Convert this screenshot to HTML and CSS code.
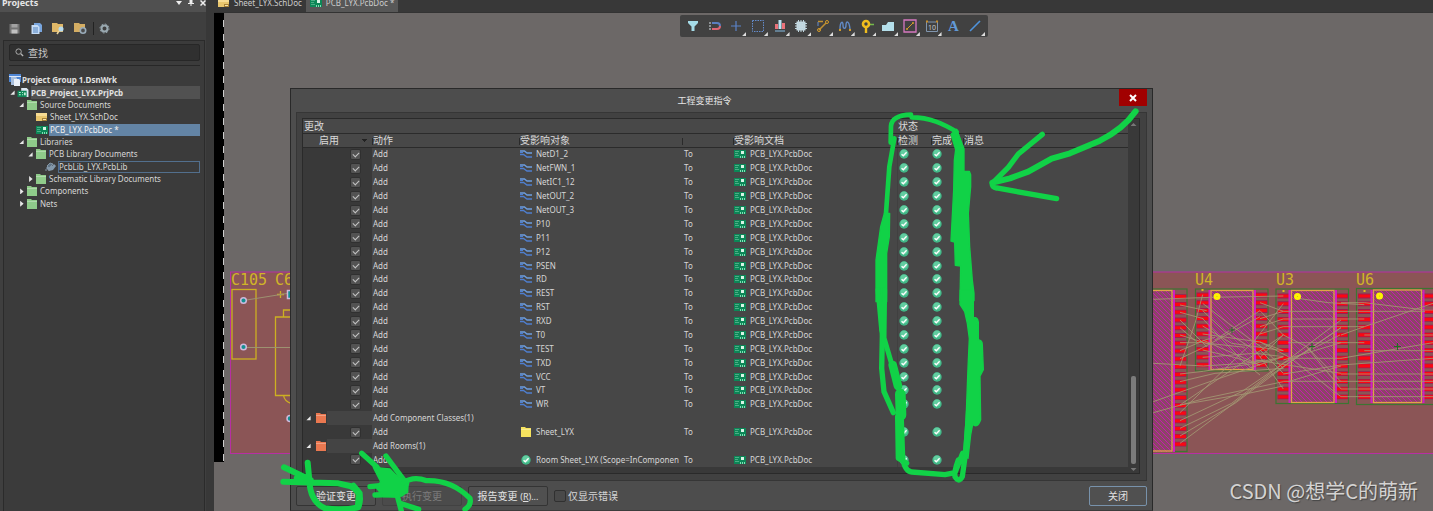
FILE: index.html
```html
<!DOCTYPE html>
<html lang="zh-CN">
<head>
<meta charset="utf-8">
<title>PCB_LYX.PcbDoc - 工程变更指令</title>
<link rel="stylesheet" href="styles.css">
</head>
<body>
<svg class="defs" aria-hidden="true">
  <symbol id="i-sch" viewBox="0 0 12 10"><path d="M0 1h11v8H0z" fill="#e9c66d"/><path d="M0 1h11v3H0z" fill="#f7dc93"/><path d="M6 6h5v3H6z" fill="#a78136"/><path d="M7 7h3v1H7z" fill="#f9e6b0"/></symbol>
  <symbol id="i-pcb" viewBox="0 0 12 10"><path d="M0 1h12v8H0z" fill="#0c8757"/><path d="M1 2.500h4M1 4.500h3M1 6.500h4" stroke="#5cb892" stroke-width=".8"/><path d="M7 2h3v3H7z" fill="#d9f5e6"/><path d="M6 7h1v2H6zM8 7h1v2H8zM10 7h1v2h-1z" fill="#7fe0b5"/></symbol>
  <symbol id="i-folder" viewBox="0 0 12 10"><path d="M1 0h4l1 1h5v9H1z" fill="currentColor"/><path d="M1 2.500h10" stroke="#fff" stroke-opacity=".3"/></symbol>
  <symbol id="i-net" viewBox="0 0 12 9"><g fill="none" stroke-width="1.300"><path d="M0 1.500h4.500L7 3.500h5" stroke="#6d9ee0"/><path d="M0 5h3.500L7 7.500h5M0 2.800h3" stroke="#4f7fd0"/></g></symbol>
  <symbol id="i-ok" viewBox="0 0 10 10"><circle cx="5" cy="5" r="4.700" fill="#41b787"/><circle cx="5" cy="4" r="3.500" fill="#62cda0"/><path d="M2.600 5.200l1.700 1.600 3.300-3.500" fill="none" stroke="#fff" stroke-width="1.300"/></symbol>
  <symbol id="i-lib" viewBox="0 0 12 10"><path d="M1 6l3-3 3 1 2-2 2 2-3 4-4 1z" fill="#8398ab"/><path d="M2 4l3-3 3 1-4 4zM1 7v2M4 7v2" fill="#5f7486" stroke="#8495a3"/></symbol>
  <symbol id="i-prj" viewBox="0 0 12 11"><path d="M4 0h6l2 2v8H4z" fill="#dce7f2"/><path d="M0 3h10v7H0z" fill="#0c8757"/><path d="M1.500 4.500h2v1h-2zM1.500 7h2v1h-2zM5 4.500h1v1H5zM5 7h1v1H5zM7 5h2v3H7z" fill="#bdf0d8"/></symbol>
  <symbol id="i-group" viewBox="0 0 12 12"><path d="M0 0h12v8H0z" fill="#4f86d4"/><path d="M0 2h12v1H0z" fill="#dbe8fa"/><path d="M2 3h5l1 1v7H2z" fill="#a9bfdc"/><path d="M5 5h5l1 1v6H5z" fill="#eaf0f8"/></symbol>
</svg>

<div class="app">
  <aside class="sidebar">
    <header class="panel-head"><h2>Projects</h2>
      <button aria-label="Menu"><svg viewBox="0 0 6 6"><path d="M0 1h6L3 5z"/></svg></button>
      <button aria-label="Pin"><svg viewBox="0 0 6 6"><path d="M1.500 0h3v3H6v1H0V3h1.500zM2.500 4h1v2h-1z"/></svg></button>
      <button aria-label="Close panel"><svg viewBox="0 0 6 6"><path d="M.5.5l5 5M5.500.5l-5 5" stroke="#eee" stroke-width="1.500"/></svg></button>
    </header>
    <div class="panel-tools">
      <button aria-label="Save"><svg viewBox="0 0 13 13"><path d="M1.500 2h10v9.500h-10z" fill="#747474"/><path d="M3.500 2h6v3.500h-6z" fill="#a2a2a2"/><path d="M3.500 7.500h6v4h-6z" fill="#c0c0c0"/></svg></button>
      <button aria-label="Copy"><svg viewBox="0 0 13 13"><path d="M4 1h6l2 2v7H4z" fill="#78a5de"/><path d="M1.500 3h6l2 2v7h-8z" fill="#c5dcf6"/><path d="M3 6h5M3 8h5M3 10h5" stroke="#5282bd"/></svg></button>
      <button aria-label="Open"><svg viewBox="0 0 13 13"><path d="M0 1h5l1 1h5v8H0z" fill="#e0b868"/><circle cx="9" cy="7" r="2.500" fill="#b8dcf0"/><path d="M7 9l-2 3" stroke="#eed69c" stroke-width="1.500"/></svg></button>
      <button aria-label="Folder options"><svg viewBox="0 0 13 13"><path d="M0 1h5l1 1h5v8H0z" fill="#d4ad63"/><circle cx="9" cy="8.500" r="2.700" fill="#4c4c4c" stroke="#9aacba" stroke-width="1.600"/></svg></button>
      <span class="rule"></span>
      <button aria-label="Settings"><svg viewBox="0 0 13 13"><circle cx="6.500" cy="6.500" r="3" fill="none" stroke="#9aa9b1" stroke-width="2"/><circle cx="6.500" cy="6.500" r="4.500" fill="none" stroke="#9aa9b1" stroke-dasharray="1.800 1.700"/></svg></button>
    </div>
    <div class="panel-body">
      <label class="search"><svg viewBox="0 0 10 10"><circle cx="4" cy="4" r="3" fill="none" stroke="#b5b5b5"/><path d="M6.500 6.500L9 9" stroke="#b5b5b5" stroke-width="1.500"/></svg><input type="text" placeholder="查找" aria-label="查找"></label>
      <ul class="tree">
        <li class="strong"><svg class="ic"><use href="#i-group"/></svg><span>Project Group 1.DsnWrk</span></li>
        <li class="strong l0 current"><i class="open"></i><svg class="ic"><use href="#i-prj"/></svg><span>PCB_Project_LYX.PrjPcb</span></li>
        <li class="l1"><i class="open"></i><svg class="ic green"><use href="#i-folder"/></svg><span>Source Documents</span></li>
        <li class="l3"><svg class="ic"><use href="#i-sch"/></svg><span>Sheet_LYX.SchDoc</span></li>
        <li class="l3"><svg class="ic"><use href="#i-pcb"/></svg><span class="selected">PCB_LYX.PcbDoc *</span></li>
        <li class="l1"><i class="open"></i><svg class="ic green"><use href="#i-folder"/></svg><span>Libraries</span></li>
        <li class="l2"><i class="open"></i><svg class="ic green"><use href="#i-folder"/></svg><span>PCB Library Documents</span></li>
        <li class="l4"><svg class="ic"><use href="#i-lib"/></svg><span class="focused">PcbLib_LYX.PcbLib</span></li>
        <li class="l2"><i class="shut"></i><svg class="ic green"><use href="#i-folder"/></svg><span>Schematic Library Documents</span></li>
        <li class="l1"><i class="shut"></i><svg class="ic green"><use href="#i-folder"/></svg><span>Components</span></li>
        <li class="l1"><i class="shut"></i><svg class="ic green"><use href="#i-folder"/></svg><span>Nets</span></li>
      </ul>
    </div>
  </aside>

  <main class="editor">
    <nav class="tabs">
      <a href="#sheet"><svg class="ic"><use href="#i-sch"/></svg>Sheet_LYX.SchDoc</a>
      <a href="#pcb" class="active"><svg class="ic"><use href="#i-pcb"/></svg>PCB_LYX.PcbDoc *</a>
    </nav>
    <div class="canvas"><div class="ruler"></div></div>
  </main>
</div>

<svg class="board" aria-label="PCB">
  <defs>
    <pattern id="hatch" width="5" height="5" patternUnits="userSpaceOnUse"><path d="M-1-1l7 7M-1 4l2 2M4-1l2 2" stroke="#c41cae" stroke-width="1"/></pattern>
  </defs>
  <rect x="230.500" y="272" width="1300" height="181.500" fill="#8b5556" stroke="#b72fa3"/>
  <g fill="none" stroke="#cdb022" stroke-width="1.300">
    <rect x="232" y="289.500" width="24" height="69.500"/>
    <path d="M300 317h-24.500v78.500H300M283.500 317v-7H300M283.500 395.500q1 6 8 8M277 294.500h7M280.500 291v7"/>
  </g>
  <path d="M243.500 300.500L290 293M243.500 347.500H295" stroke="#9d9270" fill="none"/>
  <g fill="#158f91" stroke="#cfb9dc" stroke-width="1.500"><circle cx="243.500" cy="300.500" r="2.800"/><circle cx="243.500" cy="347" r="2.800"/><path d="M287.500 290.500h8v8h-8z"/><circle cx="290" cy="418.500" r="3"/></g>
  <g class="designator"><text x="231" y="285">C105</text><text x="275" y="285">C6</text><text x="1195" y="285">U4</text><text x="1276" y="285">U3</text><text x="1356" y="285">U6</text></g>
  <g fill="none" stroke="#3c7532" stroke-width="1.200">
    <rect x="1100" y="289" width="87" height="162.500"/><rect x="1195.500" y="289" width="72.500" height="82"/><rect x="1276" y="289" width="72.500" height="114.500"/><rect x="1356.500" y="288.500" width="90" height="116"/>
  </g>
  <g fill="none" stroke="#9f1c50" stroke-dasharray="4.800 2.960" stroke-width="13">
    <path d="M1180 294.300v153M1203 292.600v75M1261 292.600v75M1284 293.600v106M1341.500 293.600v106M1364.500 293.600v106M1430 293.600v106"/>
  </g>
  <g fill="none" stroke="#fb0712" stroke-dasharray="3.200 4.560" stroke-width="11.500">
    <path d="M1180 295.100v152M1203 293.400v74M1261 293.400v74M1284 294.400v105M1341.500 294.400v105M1364.500 294.400v105M1430 294.400v105"/>
  </g>
  <g fill="#8b4666"><path d="M1100 290h74v162h-74zM1209 290h47v80h-47zM1289 290h47v113h-47zM1371 290h53v113h-53z"/></g>
  <g fill="url(#hatch)"><path d="M1100 290h74v162h-74zM1209 290h47v80h-47zM1289 290h47v113h-47zM1371 290h53v113h-53z"/></g>
  <path d="M1174 290v162M1209.500 290v80M1255 290v80M1289.500 290v113M1336 290v113M1371.500 290v113M1423.500 290v113" stroke="#cf1ec3" stroke-width="2"/>
  <g fill="none" stroke="#dfa348" stroke-width="1.300"><rect x="1100" y="290.500" width="72" height="160.500"/><rect x="1211" y="290.500" width="42" height="79"/><rect x="1291.500" y="290.500" width="42.500" height="112"/><rect x="1373.500" y="290" width="48" height="112.500"/></g>
  <g transform="translate(1145 260) scale(.3333)" fill="none" stroke="#a39872" stroke-width="3" opacity=".85">
    <path d="M25 118L195 112L415 108M105 135L185 152M105 157L175 176M105 180L150 225L185 260M105 203L160 250M105 225L200 255M105 248H170L300 262M105 272L180 240L210 232M105 296L170 265L345 170M173 104L150 190L105 318M105 342L175 334L330 310L415 290M105 365L210 340L415 325M25 310L175 318L300 310L360 300M25 425L180 370L415 290M25 458L180 415L415 365M105 435L310 400L415 378M105 435L415 225M105 458L200 365L330 240L415 131M105 482L290 395L415 310L585 225M105 505L260 430L415 310L588 180M105 528L270 430L430 310L588 203M105 550L240 450L370 350L588 203M173 130L250 190L350 262L415 325M173 152L240 215L330 270L415 387M173 176L290 300L345 345M173 198L260 250L415 272M173 222L345 246L415 272M173 240L345 315M173 270L260 290L345 315M173 292L330 280L415 290M210 240L345 152M345 128L415 154M345 152L415 225L485 260L588 387M345 176L415 154M345 200L415 177M345 222L415 200M345 246L430 290L588 410M345 270L415 340M345 292L415 225M330 300L588 340M458 115L550 128L658 134M588 128H658L840 150H864M415 154H840M415 177H658M588 225L658 200L864 130M415 200H658M430 248H658M658 272H864M430 295H588L864 248M658 225H864M415 342L588 315L864 295M588 342H864M415 364H588M588 364H864M588 387H864M588 410H864M430 365L588 318M485 260L588 365M415 300L588 248"/>
  </g>
  <g fill="#c4b030" stroke="#fff300" stroke-width="3"><circle cx="1217" cy="296.500" r="2"/><circle cx="1297.500" cy="296.500" r="2"/><circle cx="1379.500" cy="296" r="2"/></g>
  <path d="M1201.500 290h2M1282.500 291h2M1363.500 291h2" stroke="#e0c020" stroke-width="2"/>
  <path d="M1394 346.500h7M1397.500 343v7M1309 346.500h6M1312 343v7M1229 330h6M1232 327v6" stroke="#1f6f22"/>
</svg>

<div class="toolbar" role="toolbar" aria-label="PCB tools">
  <button aria-label="Filter"><svg viewBox="0 0 14 14"><path d="M2 2h10v2L8.500 7.500V12h-3V7.500L2 4z" fill="#a5dce8"/></svg></button>
  <button aria-label="Snap"><svg viewBox="0 0 14 14"><path d="M4 4h5a3 3 0 0 1 3 3" fill="none" stroke="#5b7fc0" stroke-width="2"/><path d="M12 7a3 3 0 0 1-3 3H4" fill="none" stroke="#df6674" stroke-width="2"/><path d="M1 4h2M1 7h2M1 10h2" stroke="#d7e0e5"/></svg></button>
  <button class="more" aria-label="Move"><svg viewBox="0 0 14 14"><path d="M7 2v10M2 7h10" stroke="#5b83c9" stroke-width="1.200"/></svg></button>
  <button class="more" aria-label="Select"><svg viewBox="0 0 14 14"><path d="M1.500 1.500h11v11h-11z" fill="none" stroke="#648ccd" stroke-dasharray="1.500 1"/></svg></button>
  <button class="more" aria-label="Align"><svg viewBox="0 0 14 14"><path d="M2 12h10" stroke="#85bde4"/><path d="M2 5h3v5H2z" fill="#ea727a"/><path d="M5.500 1H8.500v9h-3z" fill="#b9e3f2"/><path d="M9 4h3v6H9z" fill="#ea727a"/></svg></button>
  <button class="more" aria-label="Component"><svg viewBox="0 0 14 14"><path d="M2.500 2.500h9v9h-9z" fill="#c8dbe3"/><path d="M4.500 1v12M7 1v12M9.500 1v12M1 4.500h12M1 7h12M1 9.500h12" stroke="#bfd6df"/></svg></button>
  <button class="more" aria-label="Route"><svg viewBox="0 0 14 14"><path d="M2 2.500h5M3 11l7-7" stroke="#c09134" stroke-width="1.500"/><circle cx="3" cy="11" r="1.500" fill="none" stroke="#d39b2a"/><circle cx="11" cy="3" r="1.500" fill="none" stroke="#d39b2a"/><path d="M2 3v4" stroke="#648ccd"/></svg></button>
  <button class="more" aria-label="Tune"><svg viewBox="0 0 14 14"><path d="M2 10C2 3 5 1 5 6S8 10 8 6 11 1 12 10" fill="none" stroke="#628ac6" stroke-width="1.400"/><path d="M1 11h2M11 11h2" stroke="#d39b2a" stroke-width="2"/></svg></button>
  <button class="more" aria-label="Via"><svg viewBox="0 0 14 14"><path d="M8 5.500h6" stroke="#73b94c" stroke-width="1.500"/><circle cx="6" cy="5" r="3" fill="none" stroke="#f0bd1e" stroke-width="2.600"/><path d="M6 8v6" stroke="#f0bd1e" stroke-width="2.400"/></svg></button>
  <button class="more" aria-label="Polygon"><svg viewBox="0 0 14 14"><path d="M1 6h4l2-3h6v9H1z" fill="#b4dfea"/></svg></button>
  <button class="more" aria-label="Rule"><svg viewBox="0 0 14 14"><path d="M1 1h12v12H1z" fill="none" stroke="#d678c0" stroke-width="1.300"/><path d="M4 10l6-6" stroke="#d39b2a"/><circle cx="4" cy="10" r="1" fill="#d39b2a"/><circle cx="10" cy="4" r="1" fill="#d39b2a"/></svg></button>
  <button class="more" aria-label="Dimension"><svg viewBox="0 0 14 14"><path d="M1.500 3v9.500h11V3M3 3h8" fill="none" stroke="#8196af"/><path d="M1 1.500h2v2H1zM11 1.500h2v2h-2z" fill="#c58d2d"/><text x="3" y="10.500">10</text></svg></button>
  <button class="letter" aria-label="Text">A</button>
  <button class="more" aria-label="Line"><svg viewBox="0 0 14 14"><path d="M2 12L12 2" stroke="#4f94dd" stroke-width="1.600"/></svg></button>
</div>

<section class="dialog" role="dialog" aria-labelledby="dlg-title">
  <header class="dialog-head"><h1 id="dlg-title">工程变更指令</h1><button class="close" aria-label="关闭窗口"><svg viewBox="0 0 8 8"><path d="M1 1l6 6M7 1L1 7" stroke="#fff" stroke-width="2"/></svg></button></header>
  <div class="dialog-body">
    <div class="grid">
      <table>
        <colgroup><col class="c-enable"><col class="c-action"><col class="c-object"><col class="c-to"><col class="c-doc"><col class="c-check"><col class="c-done"><col></colgroup>
        <thead>
          <tr><th colspan="5">更改</th><th colspan="3">状态</th></tr>
          <tr class="columns"><th class="enable">启用</th><th>动作</th><th>受影响对象</th><th></th><th>受影响文档</th><th>检测</th><th>完成</th><th>消息</th></tr>
        </thead>
        <tbody id="changes"></tbody>
      </table>
      <div class="scroll"><span class="up"></span><span class="thumb"></span><span class="down"></span></div>
    </div>
  </div>
  <footer class="dialog-foot">
    <button class="btn">验证变更</button>
    <button class="btn" disabled>执行变更</button>
    <button class="btn">报告变更 <small>(<u>R</u>)...</small></button>
    <label class="only"><input type="checkbox">仅显示错误</label>
    <button class="btn primary">关闭</button>
  </footer>
</section>

<svg class="ink" aria-hidden="true">
  <g transform="translate(840 80) scale(.3333)">
    <path d="M887 94C862 130 820 162 780 182L690 220L635 236L565 275L510 295L457 308" stroke-width="18"/>
    <path d="M607 163L535 222L505 262L457 310Q455 322 470 324L560 340L650 356"/>
    <path d="M213 104C175 105 155 118 153 138L152 188M215 112C270 112 310 132 350 155M163 175L148 260L138 400" stroke-width="14"/>
    <path class="solid" d="M133 400l16 0-1 70-8 50v145h-32V540l14-100zM350 148l22 58v68l16 0 4 10v36l-7 80 4 100 8 100 5 40v22h-42l2-104-16-2-2-70-11-3 8-152 2-90 4-32-14-46z"/>
  </g>
  <g transform="translate(860 290) scale(.3333)">
    <path d="M64 0L67 140L65 235L72 305L100 368"/>
    <path d="M54 0L65 120L96 225M74 0L72 150" stroke-width="15"/>
    <path d="M98 225L114 288" stroke-width="26"/><path d="M121 312L123 375" stroke-width="32"/>
    <path d="M113 380L115 505L140 520M124 390L128 505Q135 545 155 546L255 554L285 548L308 490M295 510Q282 545 285 560Q297 580 307 560L318 480L328 330"/>
    <path class="solid" d="M301 0h39v82q14-1 15 15v52q12 2 12 15l3 75-10 20 2 130q-10 28-24 14l-6 32-8 70-14-10 8-100 6-160 4-90-6-45-8-35-14-22z"/>
  </g>
  <g transform="translate(270 380) scale(.3333)">
    <path d="M113 248L118 300Q120 365 165 385Q215 392 265 382Q282 335 240 318L205 310L40 305M42 262L122 300M80 295H115" stroke-width="18"/>
    <path d="M250 318L268 340L265 376" stroke-width="20"/>
    <path d="M275 220L320 260L345 300M348 228L405 305M300 320L350 315M315 345L395 342L410 310"/>
    <path class="solid" d="M310 262l50 5 20 20 35 12-2 38-30 15-43-2-20-25 12-20z"/>
    <path d="M400 308Q430 287 470 302C530 300 570 325 600 355Q605 375 585 388M380 340L396 400M390 370L446 388"/>
  </g>
</svg>
<p class="watermark">CSDN @想学C的萌新</p>
<script src="app.js"></script>
</body>
</html>
```
FILE: styles.css
```css
* { box-sizing: border-box; }
html, body { height: 100%; }
body { margin: 0; overflow: hidden; position: relative; background: #6c6867; color: #d6d6d6; font: 8px/12px "Noto Sans", "Noto Sans CJK SC", sans-serif; }
button { padding: 0; border: 0; background: none; color: inherit; font: inherit; }
h1, h2, ul, p { margin: 0; padding: 0; }
.defs { position: absolute; width: 0; height: 0; }
.ic { width: 12px; height: 10px; flex: none; }
.green { color: #8fcb8a; }

.app { display: flex; height: 100%; }
.sidebar { width: 206px; flex: none; display: flex; flex-direction: column; background: #3f3f3f; }
.panel-head { display: flex; gap: 6px; height: 12px; background: #505050; }
.panel-head h2 { flex: 1; padding-left: 2px; font-size: 9px; line-height: 6px; color: #e6e6e6; }
.panel-head button { width: 6px; height: 6px; display: flex; }
.panel-head svg { width: 6px; height: 6px; fill: #eee; }
.panel-tools { display: flex; align-items: center; gap: 9px; height: 28px; padding: 5px 8px 0; }
.panel-tools button, .panel-tools svg { width: 13px; height: 13px; display: block; }
.rule { width: 1px; height: 13px; margin: 0 -5px 0 -3px; background: #222; }
.panel-body { flex: 1; margin: 0 1px 0 3px; padding: 3px 4px 0 5px; border: 1px solid #2b2b2b; border-bottom: 0; background: #3b3b3b; }
.search { display: flex; align-items: center; gap: 4px; height: 17px; padding: 0 5px; border: 1px solid #272727; border-radius: 2px; background: #303030; }
.search svg { width: 9px; height: 9px; }
.search input { flex: 1; min-width: 0; padding: 0; border: 0; outline: 0; background: none; color: #ccc; font: 10px/14px "Noto Sans CJK SC", sans-serif; }
.search input::placeholder { color: #c8c8c8; }
.tree { display: grid; grid-auto-rows: 1fr; height: 136px; margin-top: 4px; padding: 8px 0 0; list-style: none; border-top: 1px solid #272727; box-sizing: content-box; }
.tree li { display: flex; align-items: center; min-height: 0; gap: 1px; }
.tree span { flex: 1; height: 12px; line-height: 12px; padding-left: 1px; white-space: nowrap; }
.tree li:first-child span { padding-left: 0; }
.tree li:first-child .ic { height: 12px; }
.tree .strong { font-weight: bold; color: #e2e2e2; }
.tree .current { background: linear-gradient(90deg, #3b3b3b 22px, #515151 22px); }
.tree .selected { background: #6384a5; color: #f0f0f0; }
.tree .focused { border: 1px solid #526f8d; line-height: 10px; padding: 0; }
.l1 { padding-left: 9px; } .l2 { padding-left: 18px; } .l3 { padding-left: 27px; } .l4 { padding-left: 36px; }
.tree i { width: 7px; height: 6px; flex: none; }
.open { background: #e8e8e8; clip-path: polygon(80% 15%, 80% 85%, 20% 85%); }
.shut { background: #e8e8e8; clip-path: polygon(30% 0, 80% 50%, 30% 100%); }

.editor { flex: 1; min-width: 0; display: flex; flex-direction: column; padding-left: 8px; background: #383838; }
.tabs { display: flex; height: 13px; border-bottom: 1px solid #333; }
.tabs a { display: flex; gap: 4px; align-items: center; height: 12px; padding: 0 4px 6px; color: #ccc; text-decoration: none; white-space: nowrap; }
.tabs .active { background: #575757; }
.canvas { flex: 1; background: #6c6867; }
.ruler { width: 10px; height: calc(100% - 49px); background: repeating-linear-gradient(#000 0 7px, #ccc 7px 14px) right / 1px 100% no-repeat, #000; }

.board, .ink { position: absolute; inset: 0; width: 100%; height: 100%; }
.ink { pointer-events: none; fill: none; stroke: #11d247; stroke-width: 16; stroke-linecap: round; stroke-linejoin: round; }
.ink .solid { fill: #11d247; stroke-width: 4; }
.designator { fill: #d0b428; font: 15px "DejaVu Sans Mono", monospace; }

.toolbar { position: absolute; left: 680px; top: 15px; width: 308px; height: 22px; padding: 0 2px; display: grid; grid-template-columns: repeat(14, 1fr); border-radius: 2px; background: #414141; }
.toolbar button { position: relative; display: grid; place-items: center; }
.toolbar svg { width: 14px; height: 14px; }
.toolbar text { font: 7px "Noto Sans", sans-serif; fill: #c9c9c9; }
.toolbar .letter { color: #6299d6; font: bold 15px "Liberation Serif", serif; }
.more::after { content: ""; position: absolute; right: 1px; bottom: 1px; width: 4px; height: 4px; background: #ddd; clip-path: polygon(100% 0, 100% 100%, 0 100%); }

.dialog { position: absolute; left: 290px; top: 88px; bottom: 0; width: 863px; display: flex; flex-direction: column; padding: 0 5px; border: 1px solid #292929; border-bottom-color: #3c3c3c; background: #4d4d4d; }
.dialog-head { display: flex; height: 23px; }
.dialog-head h1 { flex: 1; padding-right: 6px; text-align: center; font-size: 9px; line-height: 23px; font-weight: normal; color: #e6e6e6; }
.close { width: 28px; height: 17px; display: grid; place-items: center; background: #a10000; }
.close svg { width: 8px; height: 8px; }
.dialog-body { padding: 5px 6px 6px 5px; border: 1px solid #363636; background: #414141; }
.grid { display: flex; border: 1px solid #2a2a2a; background: #393939; padding-bottom: 6px; }
table { flex: 1; width: 0; height: 348px; table-layout: fixed; border-collapse: collapse; background: #474747; }
.c-enable { width: 69px; } .c-action { width: 147px; } .c-object { width: 163px; } .c-to { width: 51px; } .c-doc { width: 164px; } .c-check { width: 34px; } .c-done { width: 32px; }
th, td { padding: 0 0 0 1px; text-align: left; font-weight: normal; white-space: nowrap; overflow: hidden; line-height: 12px; }
td:nth-child(4) { padding-left: 2px; }
th { height: 14px; padding: 0 1px; border-bottom: 1px solid #2b2b2b; background: #484848; color: #dadada; font-size: 10px; }
.columns th { background: linear-gradient(#2a2a2a, #2a2a2a) 0 4px / 1px 7px no-repeat, #484848; padding-left: 1px; }
.columns .enable { padding-left: 16px; background: conic-gradient(from 315deg at 50% 100%, #222 0 90deg, #0000 0) 59px 5px / 5px 3px no-repeat, #484848; }
td.enable { background: #393939; text-align: right; padding: 0 11px 0 0; }
.group td.enable { background: linear-gradient(90deg, #393939 24px, #444 24px); text-align: left; padding: 0; }
.group .line { gap: 3px; padding-left: 2px; color: #ea7850; }
.group i { width: 7px; height: 6px; }
.line { display: flex; align-items: center; gap: 4px; }
.enable input { appearance: none; display: block; width: 11px; height: 11px; margin: 0 0 0 auto; border: 1px solid #303030; border-radius: 2px; background: #535353; position: relative; }
.enable input:checked::after { content: ""; position: absolute; left: 2px; top: 2px; width: 5px; height: 3px; border: solid #c4c4c4; border-width: 0 0 1px 1px; transform: rotate(-45deg); }
.state { padding-left: 1px; border-left: 1px solid #404040; }
.state + .state { border: 0; }
.state svg { display: block; width: 10px; height: 10px; }
.yellow { color: #f5e25e; }
.scroll { width: 11px; display: flex; flex-direction: column; align-items: center; padding: 4px 0 0; }
.up { width: 6px; height: 3px; background: #777; clip-path: polygon(50% 0, 100% 100%, 0 100%); }
.thumb { width: 5px; height: 88px; margin-top: auto; border-radius: 2px; background: #7b7b7b; }
.down { width: 6px; height: 3px; margin-top: 4px; background: #777; clip-path: polygon(0 0, 100% 0, 50% 100%); }
.grid .scroll { margin-bottom: -4px; }
.dialog-foot { display: flex; align-items: center; gap: 6px; padding-top: 5px; }
.btn { width: 80px; height: 20px; border: 1px solid #343434; border-radius: 2px; background: #505050; color: #e2e2e2; font-size: 10px; line-height: 16px; }
.btn small { font-size: 9px; }
.btn:disabled { background: #4b4b4b; border-color: #424242; color: #7c7c7c; }
.primary { width: 58px; margin-left: auto; border-color: #7892ab; }
.only { display: flex; align-items: center; gap: 2px; font-size: 10px; }
.only input { appearance: none; width: 12px; height: 12px; margin: 0; border: 1px solid #303030; border-radius: 2px; background: #494949; }
.watermark { position: absolute; right: 15px; bottom: 6px; color: #d4d3d2; font: 20px/28px "Noto Sans CJK SC", sans-serif; text-shadow: 1px 1px 1px #444; white-space: nowrap; }
```
FILE: app.js
```javascript
const nets = ["NetD1_2", "NetFWN_1", "NetIC1_12", "NetOUT_2", "NetOUT_3", "P10", "P11", "P12", "PSEN", "RD", "REST", "RST", "RXD", "T0", "TEST", "TXD", "VCC", "VT", "WR"];
const icon = (id, cls = "") => `<svg class="ic ${cls}"><use href="#i-${id}"/></svg>`;
const ok = `<svg><use href="#i-ok"/></svg>`;

const change = (name, id, cls) => `<tr>
  <td class="enable"><input type="checkbox" checked aria-label="${name}"></td>
  <td>Add</td><td><div class="line">${icon(id, cls)}${name}</div></td><td>To</td>
  <td><div class="line">${icon("pcb")}PCB_LYX.PcbDoc</div></td>
  <td class="state">${ok}</td><td class="state">${ok}</td><td></td></tr>`;

const group = (title) => `<tr class="group">
  <td class="enable"><div class="line"><i class="open"></i>${icon("folder")}</div></td>
  <td>${title}</td><td></td><td></td><td></td><td class="state"></td><td></td><td></td></tr>`;

document.getElementById("changes").innerHTML =
  nets.map((n) => change(n, "net")).join("") +
  group("Add Component Classes(1)") + change("Sheet_LYX", "folder", "yellow") +
  group("Add Rooms(1)") + change("Room Sheet_LYX (Scope=InComponen", "ok");
```
